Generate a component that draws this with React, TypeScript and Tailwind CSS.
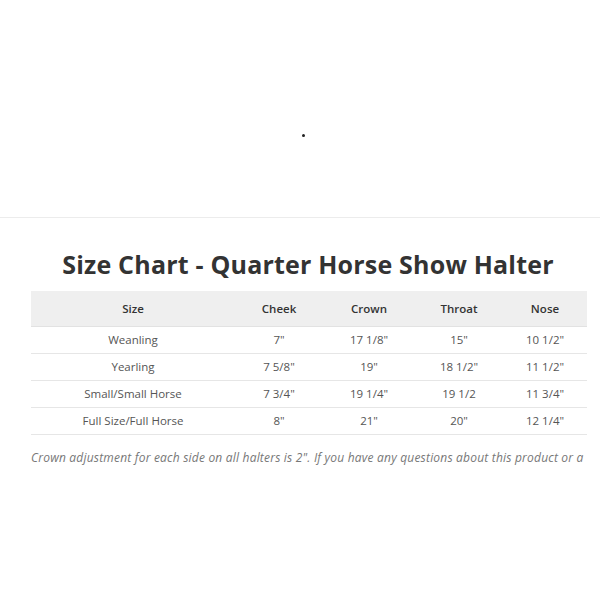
import React from "react";

const rows = [
	{ size: "Weanling", cheek: "7\"", crown: "17 1/8\"", throat: "15\"", nose: "10 1/2\"" },
	{ size: "Yearling", cheek: "7 5/8\"", crown: "19\"", throat: "18 1/2\"", nose: "11 1/2\"" },
	{ size: "Small/Small Horse", cheek: "7 3/4\"", crown: "19 1/4\"", throat: "19 1/2", nose: "11 3/4\"" },
	{ size: "Full Size/Full Horse", cheek: "8\"", crown: "21\"", throat: "20\"", nose: "12 1/4\"" },
];

const cols = "grid grid-cols-[204px_88px_92px_88px_84px]";

export default function App() {
	return (
		<div className="w-[600px] h-[600px] overflow-hidden bg-white font-['Open_Sans',sans-serif]">
			<div className="h-[218px] flex justify-center pt-[134px] border-b border-[#ececec]">
				<div className="ml-[6px] w-[3px] h-[3px] rounded-full bg-[#222]" />
			</div>

			<div className="px-[31px]">
				<h1 className="mt-[31px] text-center text-[25px] leading-[30px] font-bold text-[#333] tracking-[0.2px] pl-[16px]">
					Size Chart - Quarter Horse Show Halter
				</h1>

				<div className="mt-[12px] w-[556px] text-[11.5px] text-center">
					<div className={`${cols} h-[36px] items-center bg-[#efefef] border-b border-[#e2e2e2] font-semibold text-[#333]`}>
						<div>Size</div>
						<div>Cheek</div>
						<div>Crown</div>
						<div>Throat</div>
						<div>Nose</div>
					</div>
					{rows.map((r) => (
						<div key={r.size} className={`${cols} h-[27px] items-center border-b border-[#e6e6e6] text-[#555]`}>
							<div>{r.size}</div>
							<div>{r.cheek}</div>
							<div>{r.crown}</div>
							<div>{r.throat}</div>
							<div>{r.nose}</div>
						</div>
					))}
				</div>

				<p className="mt-[14px] whitespace-nowrap italic text-[12px] tracking-[0.2px] text-[#777]">
					Crown adjustment for each side on all halters is 2". If you have any questions about this product or a
				</p>
			</div>
		</div>
	);
}
